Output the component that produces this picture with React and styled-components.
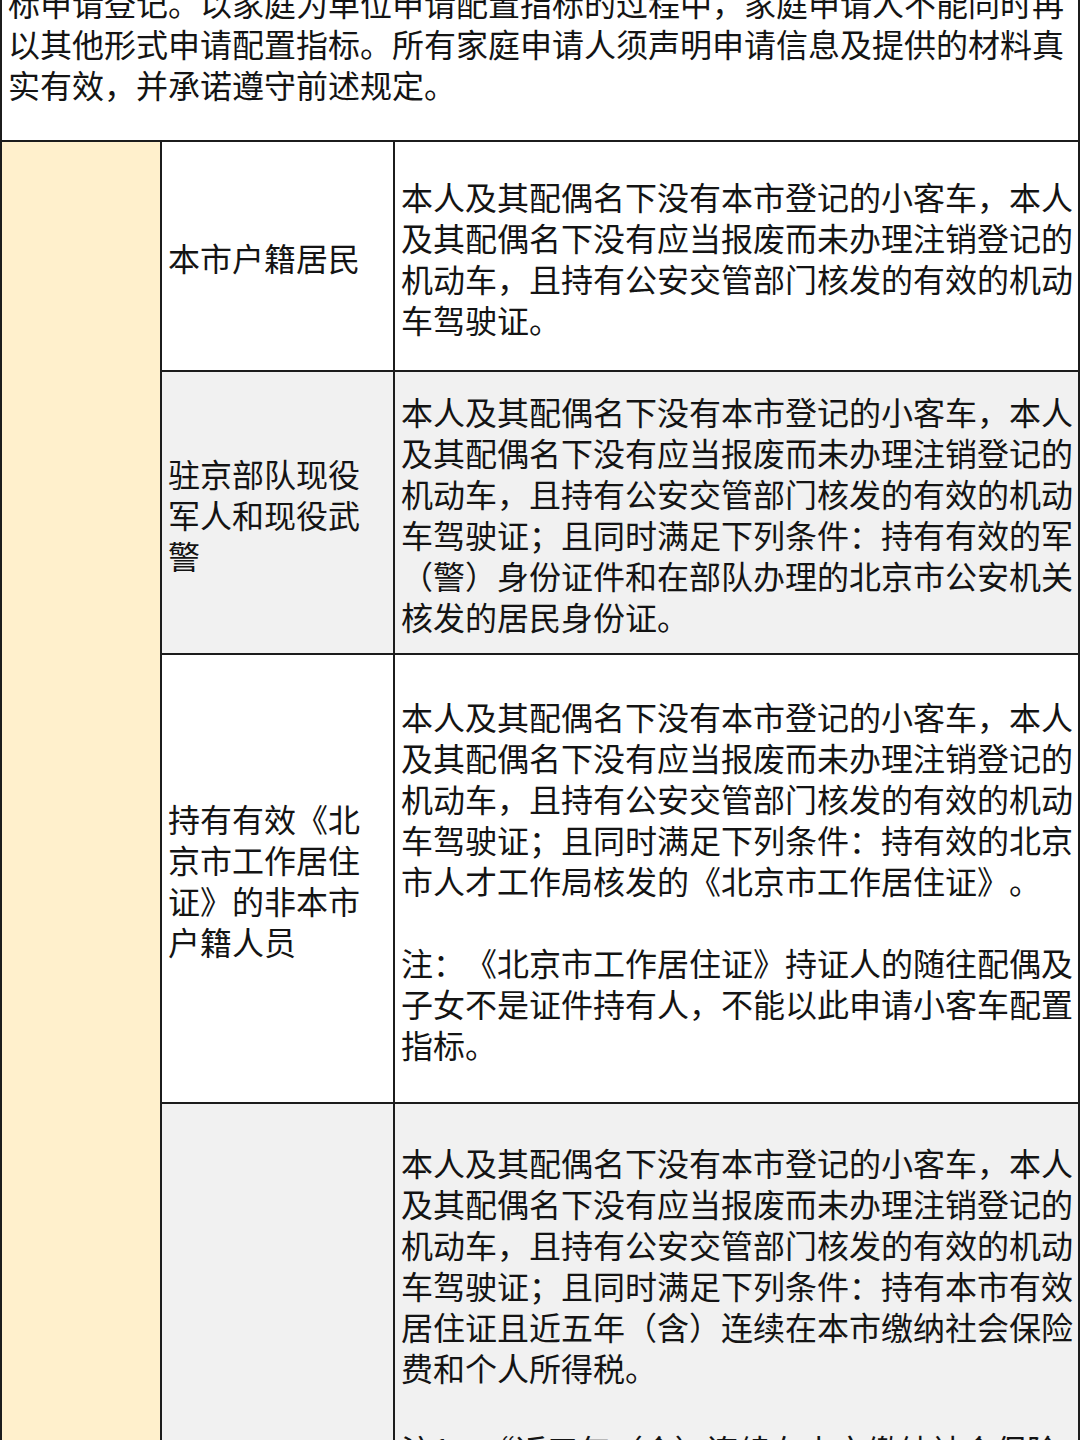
import React from 'react'
import styled, { createGlobalStyle } from 'styled-components'

const GlobalStyle = createGlobalStyle`
  html, body {
    margin: 0;
    padding: 0;
    background: #ffffff;
  }
  body {
    font-family: "Noto Sans CJK SC", "Noto Sans", sans-serif;
    color: #141414;
    text-spacing-trim: space-all;
  }
`

const intro =
  '标申请登记。以家庭为单位申请配置指标的过程中，家庭申请人不能同时再\n以其他形式申请配置指标。所有家庭申请人须声明申请信息及提供的材料真\n实有效，并承诺遵守前述规定。'

const base =
  '本人及其配偶名下没有本市登记的小客车，本人\n及其配偶名下没有应当报废而未办理注销登记的\n机动车，且持有公安交管部门核发的有效的机动\n车驾驶证'

const rows = [
  {
    who: '本市户籍居民',
    rule: base + '。',
    height: 228,
    shaded: false,
  },
  {
    who: '驻京部队现役\n军人和现役武\n警',
    rule:
      base +
      '；且同时满足下列条件：持有有效的军\n（警）身份证件和在部队办理的北京市公安机关\n核发的居民身份证。',
    height: 281,
    shaded: true,
  },
  {
    who: '持有有效《北\n京市工作居住\n证》的非本市\n户籍人员',
    rule:
      base +
      '；且同时满足下列条件：持有效的北京\n市人才工作局核发的《北京市工作居住证》。\n\n注：《北京市工作居住证》持证人的随往配偶及\n子女不是证件持有人，不能以此申请小客车配置\n指标。',
    height: 447,
    shaded: false,
  },
  {
    who: '',
    rule:
      base +
      '；且同时满足下列条件：持有本市有效\n居住证且近五年（含）连续在本市缴纳社会保险\n费和个人所得税。\n\n注1：“近五年（含）连续在本市缴纳社会保险\n费和个人所得税”是指申请人在申请之日前五年',
    height: 520,
    shaded: true,
    top: true,
  },
]

export default function App() {
  return (
    <>
      <GlobalStyle />
      <Page>
        <Table>
          <Intro>{intro}</Intro>
          <Category style={{ gridRow: `2 / span ${rows.length}` }} />
          {rows.map((row, i) => (
            <React.Fragment key={i}>
              <Cell $shaded={row.shaded} $top={row.top} style={{ height: row.height }}>
                <Text>{row.who}</Text>
              </Cell>
              <Cell $shaded={row.shaded} $top={row.top} style={{ height: row.height }}>
                <Text>{row.rule}</Text>
              </Cell>
            </React.Fragment>
          ))}
        </Table>
      </Page>
    </>
  )
}

const Page = styled.div`
  width: 1080px;
  margin-top: -18px;
  overflow: hidden;
`

const Table = styled.div`
  display: grid;
  grid-template-columns: 158px 231px 1fr;
  gap: 2px;
  background: #1c1c1c;
  border-left: 2px solid #1c1c1c;
  border-right: 2px solid #1c1c1c;
`

const Intro = styled.div`
  grid-column: 1 / -1;
  background: #ffffff;
  height: 158px;
  box-sizing: border-box;
  padding: 0 0 0 6px;
  font-size: 32px;
  line-height: 41px;
  white-space: pre;
  overflow: hidden;
`

const Category = styled.div`
  grid-column: 1;
  background: #fff0cc;
`

const Cell = styled.div`
  display: flex;
  align-items: ${(p) => (p.$top ? 'flex-start' : 'center')};
  box-sizing: border-box;
  padding: ${(p) => (p.$top ? '38px 0 0 6px' : '3px 0 0 6px')};
  background: ${(p) => (p.$shaded ? '#f1f1f1' : '#ffffff')};
  overflow: hidden;
`

const Text = styled.div`
  flex-shrink: 0;
  font-size: 32px;
  line-height: 41px;
  white-space: pre;
`
